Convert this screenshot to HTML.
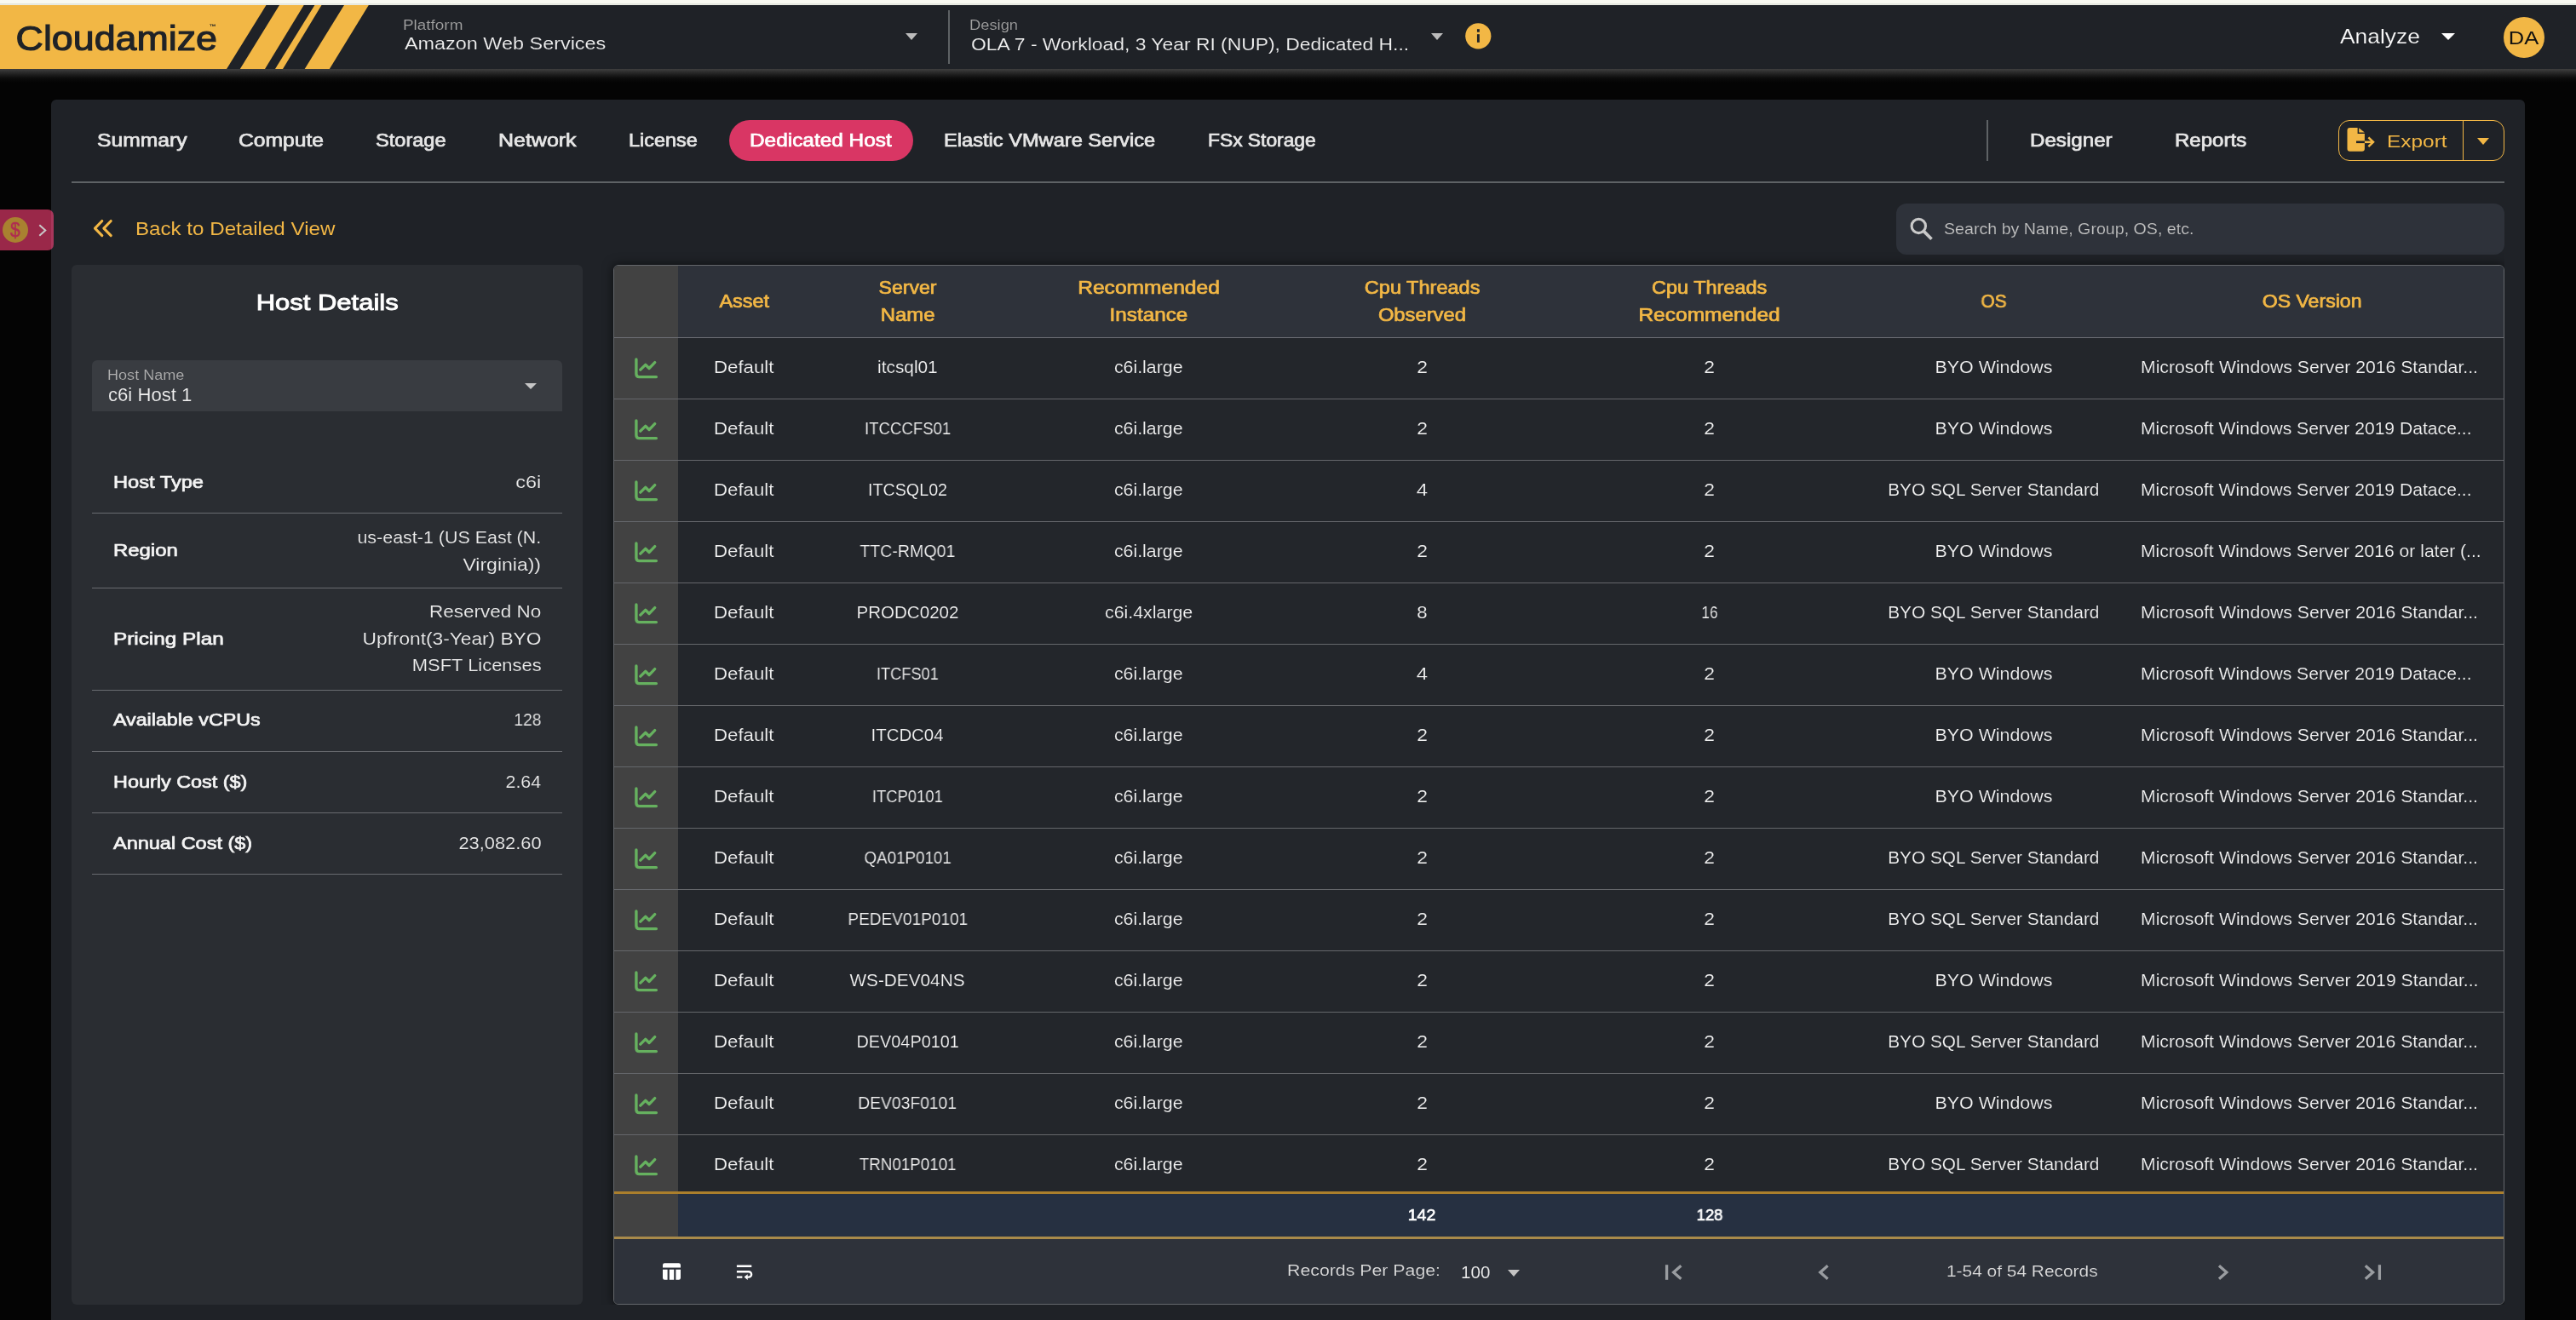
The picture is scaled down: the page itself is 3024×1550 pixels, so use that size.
<!DOCTYPE html>
<html lang="en">
<head>
<meta charset="utf-8">
<title>Cloudamize - Dedicated Host</title>
<style>
*{box-sizing:border-box;margin:0;padding:0}
html,body{width:3024px;height:1550px;overflow:hidden;background:#040404}
body{position:relative;font-family:"Liberation Sans",sans-serif;color:#ececec;-webkit-font-smoothing:antialiased}
.abs{position:absolute}
.sx{display:inline-block;white-space:nowrap;line-height:1;transform-origin:center center;will-change:transform}
.ol{transform-origin:left center}
.or{transform-origin:right center}
.topstrip{position:absolute;left:0;top:0;width:3024px;height:6px;background:linear-gradient(to bottom,#f8f9f1 0,#f8f9f1 3.6px,#e2e5dc 4.4px,#e6e9e0 5px,#eceee6 6px)}
.appbar{position:absolute;left:0;top:6px;width:3024px;height:75px;background:#1f2227}
.barshadow{position:absolute;left:0;top:81px;width:3024px;height:16px;background:linear-gradient(to bottom,#3f3f3f 0,#2f2f2f 3px,#1c1c1c 7px,#0b0b0b 11px,#040404 16px)}
.lbl{color:#a3a3a3;font-size:15.6px}
.val{color:#f1f1f1;font-size:20.6px}
.vdiv{position:absolute;width:2px;background:#5e6265}
.tri{position:absolute;width:0;height:0;border-left:7.7px solid transparent;border-right:7.7px solid transparent;border-top:8px solid #bcbcbc;margin-left:-.2px}
.card{position:absolute;left:60px;top:117px;width:2904px;height:1500px;background:#1f2227;border-radius:6px}
.tab{position:absolute;font-size:21.6px;color:#e6e6e6}
.pill{position:absolute;left:856px;top:141px;width:216px;height:48px;border-radius:24px;background:#d93664}
.hline{position:absolute;left:84px;top:213px;width:2856px;height:2px;background:#5e6265}
.gold{color:#f2b745}
.sb{font-weight:400!important;-webkit-text-stroke:0.034em currentColor}
.md{}
.search{position:absolute;left:2226px;top:239px;width:714px;height:60px;border-radius:12px;background:#2e323a}
.host{position:absolute;left:84px;top:311px;width:600px;height:1221px;border-radius:6px;background:#2a2d32}
.hsel{position:absolute;left:24px;top:112px;width:552px;height:60px;background:#383b41;border-radius:8px 8px 0 0}
.hrow{position:absolute;left:24px;width:552px;border-bottom:2px solid #43464c}
.hk{position:absolute;left:24.6px;font-size:20.6px;font-weight:700;color:#f3f3f3}
.hv{position:absolute;right:24.8px;font-size:20.6px;color:#ececec;text-align:right}
.grid{position:absolute;left:720px;top:311px;width:2220px;height:1221px;border:1px solid #64676b;border-radius:6px;background:#23262b;overflow:hidden;box-shadow:0 0 12px 1px rgba(0,0,0,.5);clip-path:inset(-24px 0 0 -24px)}
.row{position:absolute;left:0;width:2218px;height:72px;display:grid;grid-template-columns:75px 154.6px 229.8px 335.6px 306.8px 368.2px 298px 450px;border-bottom:1.5px solid rgba(255,255,255,.3)}
.row>div{display:flex;align-items:center;justify-content:center;font-size:19.7px;color:#f3f3f3;height:100%;padding-bottom:1px}
.row>div.ic{background:#424242}
.row>div>.sx{-webkit-text-stroke:0.17px #23262b}
.oc{-webkit-text-stroke:0.16px #1f2227}
.op{-webkit-text-stroke:0.16px #2a2d32}
.os{-webkit-text-stroke:0.16px #393c41}
.of{-webkit-text-stroke:0.16px #2e323a}
.thead>div>.sx{-webkit-text-stroke:0.034em currentColor}
.row>div.osv{justify-content:flex-start;padding-left:24.5px}
.thead{top:0;height:85px;background:#2e323a;border-bottom:1.5px solid rgba(255,255,255,.3)}
.thead>div{font-size:21.4px!important;color:#f2b745!important;text-align:center;flex-direction:column;line-height:32px}
.thead .sx{line-height:32px}
.tot{position:absolute;left:0;top:1087px;width:2218px;height:56.3px;background:#263041;border-top:3.5px solid #ab7f2c;border-bottom:3.5px solid #a88a4a;display:grid;grid-template-columns:75px 154.6px 229.8px 335.6px 306.8px 368.2px 298px 450px}
.tot>div{display:flex;align-items:center;justify-content:center;font-size:19.2px;color:#fff;padding-bottom:2px}
.tot>div.ic{background:#424242}
.foot{position:absolute;left:0;top:1143.3px;width:2218px;height:76px;background:#2e323a}
.foot .sx{position:absolute}
svg{display:block}
@media (max-width:1600px){html{zoom:.5}}
</style>
</head>
<body>
<div class="topstrip"></div>
<header>
<div class="appbar"></div>
<svg class="abs" style="left:0;top:6px;will-change:transform" width="440" height="75" viewBox="0 0 440 75" aria-label="Cloudamize">
<polygon points="0,0 432.8,0 386.8,75 0,75" fill="#f2b745"/>
<polygon points="312.5,0 328,0 281.8,75 266,75" fill="#1f2227"/>
<polygon points="356.7,0 369.4,0 323,75 311,75" fill="#1f2227"/>
<polygon points="377.5,0 404,0 357.7,75 332,75" fill="#1f2227"/>
<text x="18.6" y="53.3" font-family="Liberation Sans, sans-serif" font-size="41" fill="#1f2227" stroke="#1f2227" stroke-width="1.15" textLength="236.4" lengthAdjust="spacingAndGlyphs">Cloudamize</text>
<text x="245.8" y="28.2" font-family="Liberation Sans, sans-serif" font-size="8.2" font-weight="700" fill="#1f2227">™</text>
</svg>
<span class="sx abs ol lbl oc" style="left:473.4px;top:21.8px;font-size:15.6px;transform:scaleX(1.2125)">Platform</span>
<span class="sx abs ol val oc" style="left:474.5px;top:41.4px;font-size:20.6px;transform:scaleX(1.1364)">Amazon Web Services</span>
<div class="tri" style="left:1063.5px;top:38.7px"></div>
<div class="vdiv" style="left:1113px;top:12px;height:62.5px"></div>
<span class="sx abs ol lbl oc" style="left:1138.4px;top:21.8px;font-size:15.6px;transform:scaleX(1.1741)">Design</span>
<span class="sx abs ol val oc" style="left:1139.5px;top:41.8px;font-size:20.6px;transform:scaleX(1.1101)">OLA 7 - Workload, 3 Year RI (NUP), Dedicated H...</span>
<div class="tri" style="left:1680px;top:38.7px"></div>
<svg class="abs" style="left:1720px;top:27px" width="31" height="31" viewBox="0 0 31 31"><circle cx="15.3" cy="15.3" r="15.1" fill="#f2b745"/><rect x="13.95" y="7.2" width="2.9" height="3.5" fill="#1f2227"/><rect x="13.95" y="13.2" width="2.9" height="9.6" fill="#1f2227"/></svg>
<span class="sx abs ol oc" style="left:2746.8px;top:32.0px;font-size:23.2px;color:#fafafa;transform:scaleX(1.1370)">Analyze</span>
<div class="tri" style="left:2865.8px;top:39px;border-left-width:8.6px;border-right-width:8.6px;border-top:8.8px solid #fff"></div>
<div class="abs" style="left:2938.8px;top:19.6px;width:48.4px;height:48.4px;border-radius:50%;background:#f2b745"></div>
<div class="abs" style="left:2563px;width:800px;text-align:center;top:33.5px;"><span class="sx" style="font-size:22.4px;color:#111;transform:scaleX(1.1411)">DA</span></div>
</header>
<div class="barshadow"></div>
<main>
<div class="card"></div>
<aside>
<div class="abs" style="left:0;top:246px;width:63px;height:48px;border-radius:0 7px 7px 0;background:linear-gradient(to right,#9a2849 60px,#a8365b 60px)"></div>
<div class="abs" style="left:3px;top:255px;width:30px;height:30px;border-radius:50%;background:#a98130"></div>
<div class="abs" style="left:-382px;width:800px;text-align:center;top:257.6px;"><span class="sx" style="font-size:24.5px;color:#b02c52;-webkit-text-stroke:0.5px #b02c52;transform:scaleX(0.8504)">$</span></div>
<svg class="abs" style="left:44px;top:262px" width="12" height="17" viewBox="0 0 12 17"><path d="M2.3,2.3 L9.3,8.5 L2.3,14.8" fill="none" stroke="#c9c9c9" stroke-width="2"/></svg>
</aside>
<nav class="tabs">
<span class="sx abs ol tab sb" style="left:114.2px;top:154.3px;font-size:21.6px;transform:scaleX(1.1430)">Summary</span>
<span class="sx abs ol tab sb" style="left:280.3px;top:154.3px;font-size:21.6px;transform:scaleX(1.1412)">Compute</span>
<span class="sx abs ol tab sb" style="left:440.9px;top:154.3px;font-size:21.6px;transform:scaleX(1.0920)">Storage</span>
<span class="sx abs ol tab sb" style="left:585.3px;top:154.3px;font-size:21.6px;transform:scaleX(1.1565)">Network</span>
<span class="sx abs ol tab sb" style="left:738.4px;top:154.3px;font-size:21.6px;transform:scaleX(1.0841)">License</span>
<div class="pill"></div>
<span class="sx abs ol tab sb" style="left:880px;top:154.3px;font-size:21.6px;color:#fff;transform:scaleX(1.1291)">Dedicated Host</span>
<span class="sx abs ol tab sb" style="left:1108.2px;top:154.3px;font-size:21.6px;transform:scaleX(1.0939)">Elastic VMware Service</span>
<span class="sx abs ol tab sb" style="left:1417.8px;top:154.3px;font-size:21.6px;transform:scaleX(1.0556)">FSx Storage</span>
<div class="vdiv" style="left:2332px;top:141px;height:48px"></div>
<span class="sx abs ol tab sb" style="left:2382.9px;top:154.3px;font-size:21.6px;transform:scaleX(1.1178)">Designer</span>
<span class="sx abs ol tab sb" style="left:2552.9px;top:154.3px;font-size:21.6px;transform:scaleX(1.1134)">Reports</span>
</nav>
<div class="abs" style="left:2745px;top:141px;width:195px;height:48px;border:1.6px solid #f2b745;border-radius:13px"></div>
<div class="abs" style="left:2890.7px;top:141px;width:1.6px;height:48px;background:#f2b745"></div>
<svg class="abs" style="left:2754px;top:148px" width="36" height="32" viewBox="0 0 36 32">
<path d="M4.5,2.1 H13.6 V8.9 H21.9 V26.6 Q21.9,29.8 18.7,29.8 H4.5 Q1.5,29.8 1.5,26.6 V5.1 Q1.5,2.1 4.5,2.1 Z" fill="#f2b745"/>
<path d="M15.2,2.3 L21.8,7.4 H15.2 Z" fill="#f2b745"/>
<rect x="12" y="17.5" width="10" height="2.6" fill="#1f2227"/>
<rect x="21.9" y="17.5" width="9" height="2.6" fill="#f2b745"/>
<path d="M26.4,13.4 L32,18.8 L26.4,24.2" fill="none" stroke="#f2b745" stroke-width="2.5"/>
</svg>
<span class="sx abs ol gold md" style="left:2801.9px;top:154.7px;font-size:21px;transform:scaleX(1.1630)">Export</span>
<div class="tri" style="left:2908.5px;top:161.6px;border-top-color:#f2b745"></div>
<div class="hline"></div>
<div class="toolbar">
<svg class="abs" style="left:108px;top:256px" width="26" height="24" viewBox="0 0 26 24"><path d="M11.8,3.5 L3.45,12.05 L11.8,20.6 M22.2,3.5 L13.85,12.05 L22.2,20.6" fill="none" stroke="#f2b745" stroke-width="3.1" stroke-linecap="round" stroke-linejoin="round"/></svg>
<span class="sx abs ol gold md" style="left:158.5px;top:257.7px;font-size:21.8px;transform:scaleX(1.1075)">Back to Detailed View</span>
<div class="search"></div>
<svg class="abs" style="left:2240px;top:253px" width="32" height="32" viewBox="0 0 32 32"><circle cx="12.3" cy="12.4" r="8.2" fill="none" stroke="#c9c9c9" stroke-width="3.1"/><path d="M18.2,18.4 L27.5,27.7" stroke="#c9c9c9" stroke-width="3.7"/></svg>
<span class="sx abs ol of" style="left:2282.4px;top:259.0px;font-size:19.2px;color:#c2c2c2;transform:scaleX(1.0231)">Search by Name, Group, OS, etc.</span>
</div>
<section>
<div class="host"></div>
<div class="abs" style="left:-15.600000000000023px;width:800px;text-align:center;top:342.0px;"><span class="sx sb" style="font-size:26.4px;color:#fff;transform:scaleX(1.1739)">Host Details</span></div>
<div class="abs" style="left:108px;top:423px;width:552px;height:60px;background:#393c41;border-radius:6px 6px 0 0"></div>
<span class="sx abs ol os" style="left:125.7px;top:433.2px;font-size:15.6px;color:#b1b1b1;transform:scaleX(1.1590)">Host Name</span>
<span class="sx abs ol os" style="left:126.8px;top:452.5px;font-size:21.6px;color:#f0f0f0;transform:scaleX(1.0248)">c6i Host 1</span>
<div class="tri" style="left:616.6px;top:449.8px;border-top:7.6px solid #c6c6c6"></div>
<span class="sx abs ol sb" style="left:133.2px;top:556.3px;font-size:20.6px;color:#f4f4f4;transform:scaleX(1.1479)">Host Type</span>
<span class="sx abs or op" style="right:2388.5px;top:556.3px;font-size:20.6px;color:#ececec;transform:scaleX(1.1395)">c6i</span>
<div class="abs" style="left:108px;top:601.5px;width:552px;height:1.6px;background:#696b70"></div>
<span class="sx abs ol sb" style="left:133.2px;top:636.3px;font-size:20.6px;color:#f4f4f4;transform:scaleX(1.1599)">Region</span>
<span class="sx abs or op" style="right:2388.5px;top:620.7px;font-size:20.6px;color:#ececec;transform:scaleX(1.0413)">us-east-1 (US East (N.</span>
<span class="sx abs or op" style="right:2388.5px;top:652.7px;font-size:20.6px;color:#ececec;transform:scaleX(1.1166)">Virginia))</span>
<div class="abs" style="left:108px;top:689.8px;width:552px;height:1.6px;background:#696b70"></div>
<span class="sx abs ol sb" style="left:133.2px;top:739.8px;font-size:20.6px;color:#f4f4f4;transform:scaleX(1.1803)">Pricing Plan</span>
<span class="sx abs or op" style="right:2388.5px;top:708.3px;font-size:20.6px;color:#ececec;transform:scaleX(1.0916)">Reserved No</span>
<span class="sx abs or op" style="right:2388.5px;top:739.8px;font-size:20.6px;color:#ececec;transform:scaleX(1.1025)">Upfront(3-Year) BYO</span>
<span class="sx abs or op" style="right:2388.5px;top:771.3px;font-size:20.6px;color:#ececec;transform:scaleX(1.0646)">MSFT Licenses</span>
<div class="abs" style="left:108px;top:809.7px;width:552px;height:1.6px;background:#696b70"></div>
<span class="sx abs ol sb" style="left:133.2px;top:835.2px;font-size:20.6px;color:#f4f4f4;transform:scaleX(1.1281)">Available vCPUs</span>
<span class="sx abs or op" style="right:2388.5px;top:835.2px;font-size:20.6px;color:#ececec;transform:scaleX(0.9309)">128</span>
<div class="abs" style="left:108px;top:881.6px;width:552px;height:1.6px;background:#696b70"></div>
<span class="sx abs ol sb" style="left:133.2px;top:907.6px;font-size:20.6px;color:#f4f4f4;transform:scaleX(1.1367)">Hourly Cost ($)</span>
<span class="sx abs or op" style="right:2388.5px;top:907.6px;font-size:20.6px;color:#ececec;transform:scaleX(1.0376)">2.64</span>
<div class="abs" style="left:108px;top:953.5px;width:552px;height:1.6px;background:#696b70"></div>
<span class="sx abs ol sb" style="left:133.2px;top:979.5px;font-size:20.6px;color:#f4f4f4;transform:scaleX(1.1405)">Annual Cost ($)</span>
<span class="sx abs or op" style="right:2388.5px;top:979.5px;font-size:20.6px;color:#ececec;transform:scaleX(1.0608)">23,082.60</span>
<div class="abs" style="left:108px;top:1025.6px;width:552px;height:1.6px;background:#696b70"></div>
</section>
<section class="grid">
<div class="row thead"><div class="ic"></div><div><span class="sx sb" style="transform:scaleX(1.0972)">Asset</span></div><div><span class="sx sb" style="transform:scaleX(1.0791)">Server</span><span class="sx sb" style="transform:scaleX(1.1181)">Name</span></div><div><span class="sx sb" style="transform:scaleX(1.1492)">Recommended</span><span class="sx sb" style="transform:scaleX(1.1351)">Instance</span></div><div><span class="sx sb" style="transform:scaleX(1.0999)">Cpu Threads</span><span class="sx sb" style="transform:scaleX(1.1105)">Observed</span></div><div><span class="sx sb" style="transform:scaleX(1.0983)">Cpu Threads</span><span class="sx sb" style="transform:scaleX(1.1464)">Recommended</span></div><div><span class="sx sb" style="transform:scaleX(0.9707)">OS</span></div><div><span class="sx sb" style="transform:scaleX(1.0795)">OS Version</span></div></div>
<div class="row" style="top:85px"><div class="ic"><svg width="28" height="25" viewBox="0 0 28 25"><path d="M1.9,2 V19 Q1.9,22.6 5.5,22.6 H25.4" fill="none" stroke="#66b15f" stroke-width="3.4" stroke-linecap="round"/><path d="M6.8,14.2 L12.7,8.3 L17,12.5 L23.7,5.6" fill="none" stroke="#66b15f" stroke-width="3.3" stroke-linecap="round" stroke-linejoin="round"/></svg></div><div><span class="sx" style="transform:scaleX(1.1300)">Default</span></div><div><span class="sx" style="transform:scaleX(1.0574)">itcsql01</span></div><div><span class="sx" style="transform:scaleX(1.0830)">c6i.large</span></div><div><span class="sx" style="transform:scaleX(1.1595)">2</span></div><div><span class="sx" style="transform:scaleX(1.1595)">2</span></div><div><span class="sx" style="transform:scaleX(1.0857)">BYO Windows</span></div><div class="osv"><span class="sx ol" style="transform:scaleX(1.0770)">Microsoft Windows Server 2016 Standar...</span></div></div>
<div class="row" style="top:157px"><div class="ic"><svg width="28" height="25" viewBox="0 0 28 25"><path d="M1.9,2 V19 Q1.9,22.6 5.5,22.6 H25.4" fill="none" stroke="#66b15f" stroke-width="3.4" stroke-linecap="round"/><path d="M6.8,14.2 L12.7,8.3 L17,12.5 L23.7,5.6" fill="none" stroke="#66b15f" stroke-width="3.3" stroke-linecap="round" stroke-linejoin="round"/></svg></div><div><span class="sx" style="transform:scaleX(1.1300)">Default</span></div><div><span class="sx" style="transform:scaleX(0.9448)">ITCCCFS01</span></div><div><span class="sx" style="transform:scaleX(1.0830)">c6i.large</span></div><div><span class="sx" style="transform:scaleX(1.1595)">2</span></div><div><span class="sx" style="transform:scaleX(1.1595)">2</span></div><div><span class="sx" style="transform:scaleX(1.0857)">BYO Windows</span></div><div class="osv"><span class="sx ol" style="transform:scaleX(1.0727)">Microsoft Windows Server 2019 Datace...</span></div></div>
<div class="row" style="top:229px"><div class="ic"><svg width="28" height="25" viewBox="0 0 28 25"><path d="M1.9,2 V19 Q1.9,22.6 5.5,22.6 H25.4" fill="none" stroke="#66b15f" stroke-width="3.4" stroke-linecap="round"/><path d="M6.8,14.2 L12.7,8.3 L17,12.5 L23.7,5.6" fill="none" stroke="#66b15f" stroke-width="3.3" stroke-linecap="round" stroke-linejoin="round"/></svg></div><div><span class="sx" style="transform:scaleX(1.1300)">Default</span></div><div><span class="sx" style="transform:scaleX(1.0009)">ITCSQL02</span></div><div><span class="sx" style="transform:scaleX(1.0830)">c6i.large</span></div><div><span class="sx" style="transform:scaleX(1.2143)">4</span></div><div><span class="sx" style="transform:scaleX(1.1595)">2</span></div><div><span class="sx" style="transform:scaleX(1.0586)">BYO SQL Server Standard</span></div><div class="osv"><span class="sx ol" style="transform:scaleX(1.0727)">Microsoft Windows Server 2019 Datace...</span></div></div>
<div class="row" style="top:301px"><div class="ic"><svg width="28" height="25" viewBox="0 0 28 25"><path d="M1.9,2 V19 Q1.9,22.6 5.5,22.6 H25.4" fill="none" stroke="#66b15f" stroke-width="3.4" stroke-linecap="round"/><path d="M6.8,14.2 L12.7,8.3 L17,12.5 L23.7,5.6" fill="none" stroke="#66b15f" stroke-width="3.3" stroke-linecap="round" stroke-linejoin="round"/></svg></div><div><span class="sx" style="transform:scaleX(1.1300)">Default</span></div><div><span class="sx" style="transform:scaleX(0.9942)">TTC-RMQ01</span></div><div><span class="sx" style="transform:scaleX(1.0830)">c6i.large</span></div><div><span class="sx" style="transform:scaleX(1.1595)">2</span></div><div><span class="sx" style="transform:scaleX(1.1595)">2</span></div><div><span class="sx" style="transform:scaleX(1.0857)">BYO Windows</span></div><div class="osv"><span class="sx ol" style="transform:scaleX(1.0713)">Microsoft Windows Server 2016 or later (...</span></div></div>
<div class="row" style="top:373px"><div class="ic"><svg width="28" height="25" viewBox="0 0 28 25"><path d="M1.9,2 V19 Q1.9,22.6 5.5,22.6 H25.4" fill="none" stroke="#66b15f" stroke-width="3.4" stroke-linecap="round"/><path d="M6.8,14.2 L12.7,8.3 L17,12.5 L23.7,5.6" fill="none" stroke="#66b15f" stroke-width="3.3" stroke-linecap="round" stroke-linejoin="round"/></svg></div><div><span class="sx" style="transform:scaleX(1.1300)">Default</span></div><div><span class="sx" style="transform:scaleX(1.0443)">PRODC0202</span></div><div><span class="sx" style="transform:scaleX(1.0849)">c6i.4xlarge</span></div><div><span class="sx" style="transform:scaleX(1.1230)">8</span></div><div><span class="sx" style="transform:scaleX(0.8719)">16</span></div><div><span class="sx" style="transform:scaleX(1.0586)">BYO SQL Server Standard</span></div><div class="osv"><span class="sx ol" style="transform:scaleX(1.0770)">Microsoft Windows Server 2016 Standar...</span></div></div>
<div class="row" style="top:445px"><div class="ic"><svg width="28" height="25" viewBox="0 0 28 25"><path d="M1.9,2 V19 Q1.9,22.6 5.5,22.6 H25.4" fill="none" stroke="#66b15f" stroke-width="3.4" stroke-linecap="round"/><path d="M6.8,14.2 L12.7,8.3 L17,12.5 L23.7,5.6" fill="none" stroke="#66b15f" stroke-width="3.3" stroke-linecap="round" stroke-linejoin="round"/></svg></div><div><span class="sx" style="transform:scaleX(1.1300)">Default</span></div><div><span class="sx" style="transform:scaleX(0.9266)">ITCFS01</span></div><div><span class="sx" style="transform:scaleX(1.0830)">c6i.large</span></div><div><span class="sx" style="transform:scaleX(1.2143)">4</span></div><div><span class="sx" style="transform:scaleX(1.1595)">2</span></div><div><span class="sx" style="transform:scaleX(1.0857)">BYO Windows</span></div><div class="osv"><span class="sx ol" style="transform:scaleX(1.0727)">Microsoft Windows Server 2019 Datace...</span></div></div>
<div class="row" style="top:517px"><div class="ic"><svg width="28" height="25" viewBox="0 0 28 25"><path d="M1.9,2 V19 Q1.9,22.6 5.5,22.6 H25.4" fill="none" stroke="#66b15f" stroke-width="3.4" stroke-linecap="round"/><path d="M6.8,14.2 L12.7,8.3 L17,12.5 L23.7,5.6" fill="none" stroke="#66b15f" stroke-width="3.3" stroke-linecap="round" stroke-linejoin="round"/></svg></div><div><span class="sx" style="transform:scaleX(1.1300)">Default</span></div><div><span class="sx" style="transform:scaleX(1.0358)">ITCDC04</span></div><div><span class="sx" style="transform:scaleX(1.0830)">c6i.large</span></div><div><span class="sx" style="transform:scaleX(1.1595)">2</span></div><div><span class="sx" style="transform:scaleX(1.1595)">2</span></div><div><span class="sx" style="transform:scaleX(1.0857)">BYO Windows</span></div><div class="osv"><span class="sx ol" style="transform:scaleX(1.0770)">Microsoft Windows Server 2016 Standar...</span></div></div>
<div class="row" style="top:589px"><div class="ic"><svg width="28" height="25" viewBox="0 0 28 25"><path d="M1.9,2 V19 Q1.9,22.6 5.5,22.6 H25.4" fill="none" stroke="#66b15f" stroke-width="3.4" stroke-linecap="round"/><path d="M6.8,14.2 L12.7,8.3 L17,12.5 L23.7,5.6" fill="none" stroke="#66b15f" stroke-width="3.3" stroke-linecap="round" stroke-linejoin="round"/></svg></div><div><span class="sx" style="transform:scaleX(1.1300)">Default</span></div><div><span class="sx" style="transform:scaleX(0.9362)">ITCP0101</span></div><div><span class="sx" style="transform:scaleX(1.0830)">c6i.large</span></div><div><span class="sx" style="transform:scaleX(1.1595)">2</span></div><div><span class="sx" style="transform:scaleX(1.1595)">2</span></div><div><span class="sx" style="transform:scaleX(1.0857)">BYO Windows</span></div><div class="osv"><span class="sx ol" style="transform:scaleX(1.0770)">Microsoft Windows Server 2016 Standar...</span></div></div>
<div class="row" style="top:661px"><div class="ic"><svg width="28" height="25" viewBox="0 0 28 25"><path d="M1.9,2 V19 Q1.9,22.6 5.5,22.6 H25.4" fill="none" stroke="#66b15f" stroke-width="3.4" stroke-linecap="round"/><path d="M6.8,14.2 L12.7,8.3 L17,12.5 L23.7,5.6" fill="none" stroke="#66b15f" stroke-width="3.3" stroke-linecap="round" stroke-linejoin="round"/></svg></div><div><span class="sx" style="transform:scaleX(1.1300)">Default</span></div><div><span class="sx" style="transform:scaleX(0.9545)">QA01P0101</span></div><div><span class="sx" style="transform:scaleX(1.0830)">c6i.large</span></div><div><span class="sx" style="transform:scaleX(1.1595)">2</span></div><div><span class="sx" style="transform:scaleX(1.1595)">2</span></div><div><span class="sx" style="transform:scaleX(1.0586)">BYO SQL Server Standard</span></div><div class="osv"><span class="sx ol" style="transform:scaleX(1.0770)">Microsoft Windows Server 2016 Standar...</span></div></div>
<div class="row" style="top:733px"><div class="ic"><svg width="28" height="25" viewBox="0 0 28 25"><path d="M1.9,2 V19 Q1.9,22.6 5.5,22.6 H25.4" fill="none" stroke="#66b15f" stroke-width="3.4" stroke-linecap="round"/><path d="M6.8,14.2 L12.7,8.3 L17,12.5 L23.7,5.6" fill="none" stroke="#66b15f" stroke-width="3.3" stroke-linecap="round" stroke-linejoin="round"/></svg></div><div><span class="sx" style="transform:scaleX(1.1300)">Default</span></div><div><span class="sx" style="transform:scaleX(0.9672)">PEDEV01P0101</span></div><div><span class="sx" style="transform:scaleX(1.0830)">c6i.large</span></div><div><span class="sx" style="transform:scaleX(1.1595)">2</span></div><div><span class="sx" style="transform:scaleX(1.1595)">2</span></div><div><span class="sx" style="transform:scaleX(1.0586)">BYO SQL Server Standard</span></div><div class="osv"><span class="sx ol" style="transform:scaleX(1.0770)">Microsoft Windows Server 2016 Standar...</span></div></div>
<div class="row" style="top:805px"><div class="ic"><svg width="28" height="25" viewBox="0 0 28 25"><path d="M1.9,2 V19 Q1.9,22.6 5.5,22.6 H25.4" fill="none" stroke="#66b15f" stroke-width="3.4" stroke-linecap="round"/><path d="M6.8,14.2 L12.7,8.3 L17,12.5 L23.7,5.6" fill="none" stroke="#66b15f" stroke-width="3.3" stroke-linecap="round" stroke-linejoin="round"/></svg></div><div><span class="sx" style="transform:scaleX(1.1300)">Default</span></div><div><span class="sx" style="transform:scaleX(1.0547)">WS-DEV04NS</span></div><div><span class="sx" style="transform:scaleX(1.0830)">c6i.large</span></div><div><span class="sx" style="transform:scaleX(1.1595)">2</span></div><div><span class="sx" style="transform:scaleX(1.1595)">2</span></div><div><span class="sx" style="transform:scaleX(1.0857)">BYO Windows</span></div><div class="osv"><span class="sx ol" style="transform:scaleX(1.0784)">Microsoft Windows Server 2019 Standar...</span></div></div>
<div class="row" style="top:877px"><div class="ic"><svg width="28" height="25" viewBox="0 0 28 25"><path d="M1.9,2 V19 Q1.9,22.6 5.5,22.6 H25.4" fill="none" stroke="#66b15f" stroke-width="3.4" stroke-linecap="round"/><path d="M6.8,14.2 L12.7,8.3 L17,12.5 L23.7,5.6" fill="none" stroke="#66b15f" stroke-width="3.3" stroke-linecap="round" stroke-linejoin="round"/></svg></div><div><span class="sx" style="transform:scaleX(1.1300)">Default</span></div><div><span class="sx" style="transform:scaleX(1.0083)">DEV04P0101</span></div><div><span class="sx" style="transform:scaleX(1.0830)">c6i.large</span></div><div><span class="sx" style="transform:scaleX(1.1595)">2</span></div><div><span class="sx" style="transform:scaleX(1.1595)">2</span></div><div><span class="sx" style="transform:scaleX(1.0586)">BYO SQL Server Standard</span></div><div class="osv"><span class="sx ol" style="transform:scaleX(1.0770)">Microsoft Windows Server 2016 Standar...</span></div></div>
<div class="row" style="top:949px"><div class="ic"><svg width="28" height="25" viewBox="0 0 28 25"><path d="M1.9,2 V19 Q1.9,22.6 5.5,22.6 H25.4" fill="none" stroke="#66b15f" stroke-width="3.4" stroke-linecap="round"/><path d="M6.8,14.2 L12.7,8.3 L17,12.5 L23.7,5.6" fill="none" stroke="#66b15f" stroke-width="3.3" stroke-linecap="round" stroke-linejoin="round"/></svg></div><div><span class="sx" style="transform:scaleX(1.1300)">Default</span></div><div><span class="sx" style="transform:scaleX(0.9797)">DEV03F0101</span></div><div><span class="sx" style="transform:scaleX(1.0830)">c6i.large</span></div><div><span class="sx" style="transform:scaleX(1.1595)">2</span></div><div><span class="sx" style="transform:scaleX(1.1595)">2</span></div><div><span class="sx" style="transform:scaleX(1.0857)">BYO Windows</span></div><div class="osv"><span class="sx ol" style="transform:scaleX(1.0770)">Microsoft Windows Server 2016 Standar...</span></div></div>
<div class="row" style="top:1021px"><div class="ic"><svg width="28" height="25" viewBox="0 0 28 25"><path d="M1.9,2 V19 Q1.9,22.6 5.5,22.6 H25.4" fill="none" stroke="#66b15f" stroke-width="3.4" stroke-linecap="round"/><path d="M6.8,14.2 L12.7,8.3 L17,12.5 L23.7,5.6" fill="none" stroke="#66b15f" stroke-width="3.3" stroke-linecap="round" stroke-linejoin="round"/></svg></div><div><span class="sx" style="transform:scaleX(1.1300)">Default</span></div><div><span class="sx" style="transform:scaleX(0.9539)">TRN01P0101</span></div><div><span class="sx" style="transform:scaleX(1.0830)">c6i.large</span></div><div><span class="sx" style="transform:scaleX(1.1595)">2</span></div><div><span class="sx" style="transform:scaleX(1.1595)">2</span></div><div><span class="sx" style="transform:scaleX(1.0586)">BYO SQL Server Standard</span></div><div class="osv"><span class="sx ol" style="transform:scaleX(1.0770)">Microsoft Windows Server 2016 Standar...</span></div></div>
<div class="tot"><div class="ic"></div><div></div><div></div><div></div><div><span class="sx sb" style="transform:scaleX(1.0183)">142</span></div><div><span class="sx sb" style="transform:scaleX(0.9620)">128</span></div><div></div><div></div></div>
<div class="foot"></div>
</section>
<footer>
<svg class="abs" style="left:777px;top:1482px" width="23" height="22" viewBox="0 0 23 22"><path d="M3.2,1.2 H19.8 Q22,1.2 22,3.4 V6.6 H1 V3.4 Q1,1.2 3.2,1.2 Z M1,8.8 H6.6 V20.8 H3.2 Q1,20.8 1,18.6 Z M8.8,8.8 H14.2 V20.8 H8.8 Z M16.4,8.8 H22 V18.6 Q22,20.8 19.8,20.8 H16.4 Z" fill="#fff"/></svg>
<svg class="abs" style="left:863px;top:1483px" width="23" height="22" viewBox="0 0 23 22"><path d="M1.9,3.7 H19.3 M1.9,10.2 H15.9 A3.2,3.2 0 0 1 15.9,16.6 H13.4 M1.9,16.6 H8.4" fill="none" stroke="#fff" stroke-width="2.4"/><path d="M14.7,13.2 L10.5,16.6 L14.7,20" fill="#fff"/></svg>
<span class="sx abs ol of" style="left:1511.3px;top:1483.2px;font-size:18.9px;color:#dedede;transform:scaleX(1.1278)">Records Per Page:</span>
<span class="sx abs ol of" style="left:1715.3px;top:1483.5px;font-size:20.6px;color:#f0f0f0;transform:scaleX(0.9978)">100</span>
<div class="tri" style="left:1770.2px;top:1490.5px;border-top-color:#c4c4c4"></div>
<svg class="abs" style="left:1953px;top:1483px" width="24" height="22" viewBox="0 0 24 22"><path d="M3.6,2.2 V19.8" stroke="#999ca0" stroke-width="3.3"/><path d="M20.4,3.2 L11.6,11 L20.4,18.8" fill="none" stroke="#999ca0" stroke-width="3.3"/></svg>
<svg class="abs" style="left:2132px;top:1483px" width="18" height="22" viewBox="0 0 18 22"><path d="M13.6,3.2 L4.8,11 L13.6,18.8" fill="none" stroke="#999ca0" stroke-width="3.3"/></svg>
<span class="sx abs ol of" style="left:2284.6px;top:1484.1px;font-size:18.9px;color:#dedede;transform:scaleX(1.1054)">1-54 of 54 Records</span>
<svg class="abs" style="left:2600px;top:1483px" width="18" height="22" viewBox="0 0 18 22"><path d="M5,3.2 L13.8,11 L5,18.8" fill="none" stroke="#999ca0" stroke-width="3.3"/></svg>
<svg class="abs" style="left:2773px;top:1483px" width="24" height="22" viewBox="0 0 24 22"><path d="M3.8,3.2 L12.6,11 L3.8,18.8" fill="none" stroke="#999ca0" stroke-width="3.3"/><path d="M20.4,2.2 V19.8" stroke="#999ca0" stroke-width="3.3"/></svg>
</footer>
</main>
</body>
</html>
